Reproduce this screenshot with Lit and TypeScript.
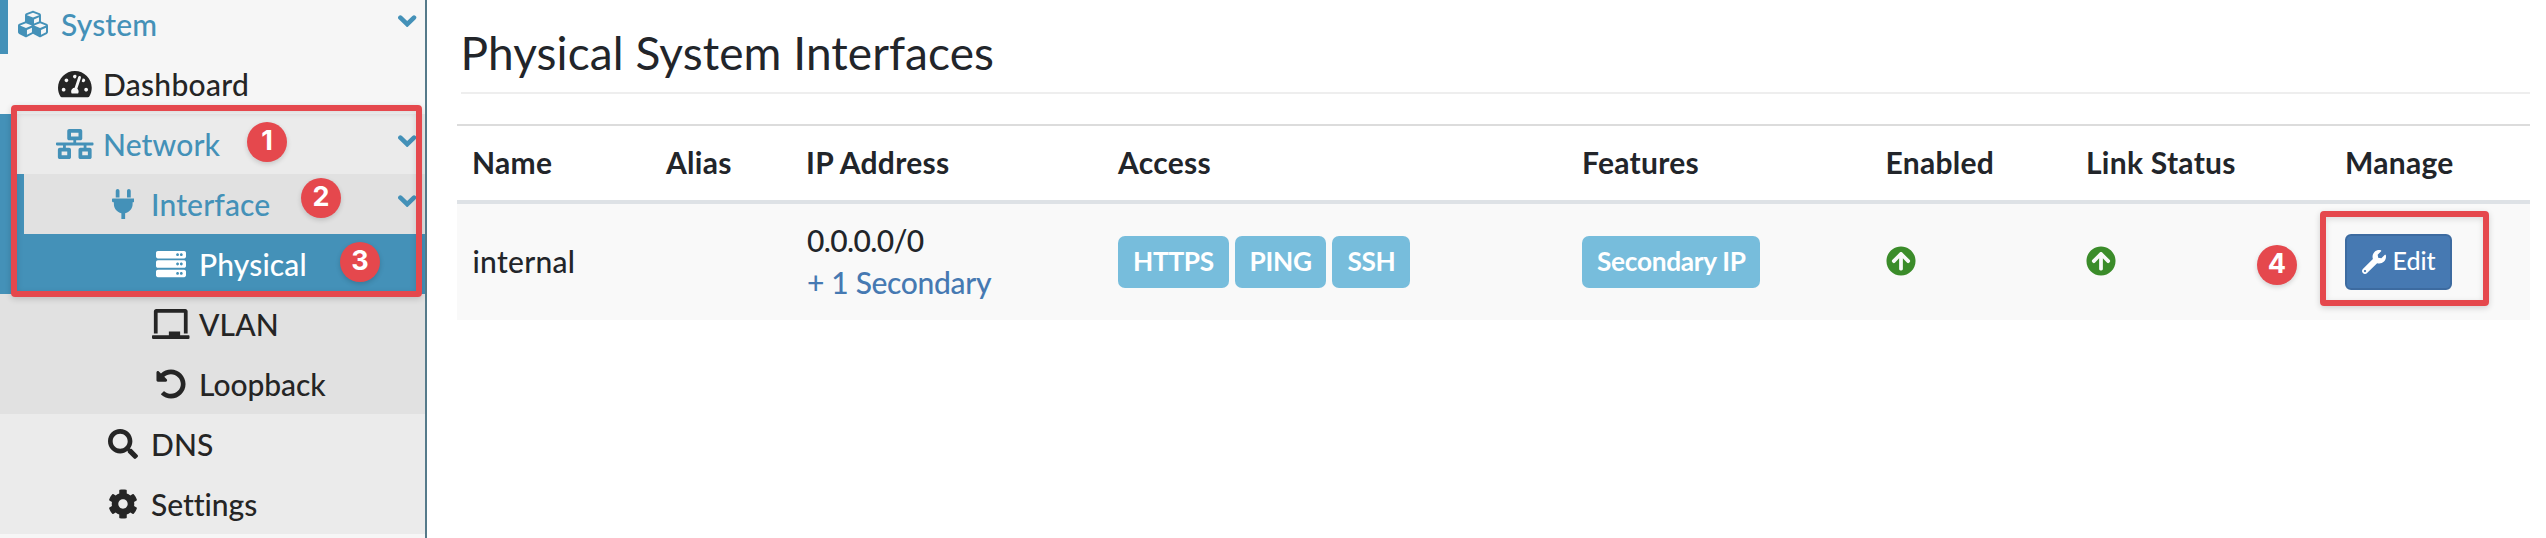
import { LitElement, html, css, svg, nothing } from "lit";
import { customElement, property } from "lit/decorators.js";

type Icon = { w: number; d: string };

const disk = (x: number, y: number) =>
  `M${x} ${y - 24}c-13.255 0-24 10.745-24 24s10.745 24 24 24 24-10.745 24-24-10.745-24-24-24z`;
const unit = (y: number) =>
  `M480 ${y + 128}H32c-17.673 0-32-14.327-32-32V${y + 32}c0-17.673 14.327-32 32-32h448c17.673 0 32 14.327 32 32v64c0 17.673-14.327 32-32 32z${disk(432, y + 64)}${disk(368, y + 64)}`;

const ICONS: Record<string, Icon> = {
  cubes: { w: 512, d: "M488.6 250.2L392 214V105.5c0-15-9.3-28.4-23.4-33.7l-100-37.5c-8.1-3.1-17.1-3.1-25.3 0l-100 37.5c-14.1 5.3-23.4 18.7-23.4 33.7V214l-96.6 36.2C9.3 255.5 0 268.9 0 283.9V394c0 13.6 7.7 26.1 19.9 32.2l100 50c10.1 5.1 22.1 5.1 32.2 0l103.9-52 103.9 52c10.1 5.1 22.1 5.1 32.2 0l100-50c12.2-6.1 19.9-18.6 19.9-32.2V283.9c0-15-9.3-28.4-23.4-33.7zM358 214.8l-85 31.9v-68.2l85-37v73.3zM154 104.1l102-38.2 102 38.2v.6l-102 41.4-102-41.4v-.6zm84 291.1l-85 42.5v-79.1l85-38.8v75.4zm0-112l-102 41.4-102-41.4v-.6l102-38.2 102 38.2v.6zm240 112l-85 42.5v-79.1l85-38.8v75.4zm0-112l-102 41.4-102-41.4v-.6l102-38.2 102 38.2v.6z" },
  gauge: { w: 576, d: "M288 32C128.94 32 0 160.94 0 320c0 52.8 14.25 102.26 39.06 144.8 5.61 9.62 16.3 15.2 27.44 15.2h443c11.14 0 21.83-5.58 27.44-15.2C561.75 422.26 576 372.8 576 320c0-159.06-128.94-288-288-288zm0 64c14.71 0 26.58 10.13 30.32 23.65-1.11 2.26-2.64 4.23-3.45 6.67l-9.22 27.67c-5.13 3.49-10.97 6.01-17.64 6.01-17.67 0-32-14.33-32-32S270.33 96 288 96zM96 384c-17.67 0-32-14.33-32-32s14.33-32 32-32 32 14.33 32 32-14.33 32-32 32zm48-160c-17.67 0-32-14.33-32-32s14.33-32 32-32 32 14.33 32 32-14.33 32-32 32zm246.77-72.41l-61.33 184C343.13 347.33 352 364.54 352 384c0 11.72-3.38 22.55-8.88 32H232.88c-5.5-9.45-8.88-20.28-8.88-32 0-33.94 26.5-61.43 59.9-63.59l61.34-184.01c4.17-12.56 17.73-19.45 30.36-15.17 12.57 4.19 19.35 17.79 15.17 30.36zm14.66 57.2l15.52-46.55c3.47-1.29 7.13-2.23 11.05-2.23 17.67 0 32 14.33 32 32s-14.33 32-32 32c-11.38-.01-20.89-6.28-26.57-15.22zM480 384c-17.67 0-32-14.33-32-32s14.33-32 32-32 32 14.33 32 32-14.33 32-32 32z" },
  network: { w: 640, d: "M640 264v-16c0-8.84-7.16-16-16-16H344v-40h72c17.67 0 32-14.33 32-32V32c0-17.67-14.33-32-32-32H224c-17.67 0-32 14.33-32 32v128c0 17.67 14.33 32 32 32h72v40H16c-8.84 0-16 7.16-16 16v16c0 8.84 7.16 16 16 16h104v40H64c-17.67 0-32 14.33-32 32v128c0 17.67 14.33 32 32 32h160c17.67 0 32-14.33 32-32V352c0-17.67-14.33-32-32-32h-56v-40h304v40h-56c-17.67 0-32 14.33-32 32v128c0 17.67 14.33 32 32 32h160c17.67 0 32-14.33 32-32V352c0-17.67-14.33-32-32-32h-56v-40h104c8.84 0 16-7.16 16-16zM256 128V64h128v64H256zm-64 320H96v-64h96v64zm352 0h-96v-64h96v64z" },
  plug: { w: 384, d: "M256 144V32c0-17.673 14.327-32 32-32s32 14.327 32 32v112h-64zm112 16H16c-8.837 0-16 7.163-16 16v32c0 8.837 7.163 16 16 16h16v32c0 77.406 54.969 141.971 128 156.796V512h64v-99.204c73.031-14.825 128-79.39 128-156.796v-32h16c8.837 0 16-7.163 16-16v-32c0-8.837-7.163-16-16-16zm-240-16V32c0-17.673-14.327-32-32-32S64 14.327 64 32v112h64z" },
  server: { w: 512, d: unit(32) + unit(192) + unit(352) },
  board: { w: 640, d: "M96 64h448v352h64V40c0-22.06-17.94-40-40-40H72C49.94 0 32 17.94 32 40v376h64V64zm528 384H480v-64H288v64H16c-8.84 0-16 7.16-16 16v32c0 8.84 7.16 16 16 16h608c8.84 0 16-7.16 16-16v-32c0-8.84-7.16-16-16-16z" },
  undo: { w: 512, d: "M255.545 8c-66.269.119-126.438 26.233-170.86 68.685L48.971 40.971C33.851 25.851 8 36.559 8 57.941V192c0 13.255 10.745 24 24 24h134.059c21.382 0 32.09-25.851 16.971-40.971l-41.75-41.75c30.864-28.899 70.801-44.907 113.23-45.273 92.398-.798 170.283 73.977 169.484 169.442C423.236 348.009 349.816 424 256 424c-41.127 0-79.997-14.678-110.63-41.556-4.743-4.161-11.906-3.908-16.368.553L89.34 422.659c-4.872 4.872-4.631 12.815.482 17.433C133.798 479.813 192.074 504 256 504c136.966 0 247.999-111.033 248-247.998C504.001 119.193 392.354 7.755 255.545 8z" },
  search: { w: 512, d: "M505 442.7L405.3 343c-4.5-4.5-10.6-7-17-7H372c27.6-35.3 44-79.7 44-128C416 93.1 322.9 0 208 0S0 93.1 0 208s93.1 208 208 208c48.3 0 92.7-16.4 128-44v16.3c0 6.4 2.5 12.5 7 17l99.7 99.7c9.4 9.4 24.6 9.4 33.9 0l28.3-28.3c9.4-9.4 9.4-24.6.1-34zM208 336c-70.7 0-128-57.2-128-128 0-70.7 57.2-128 128-128 70.7 0 128 57.2 128 128 0 70.7-57.2 128-128 128z" },
  cog: { w: 512, d: "M487.4 315.7l-42.6-24.6c4.3-23.2 4.3-47 0-70.2l42.6-24.6c4.9-2.8 7.1-8.6 5.5-14-11.1-35.6-30-67.8-54.7-94.6-3.8-4.1-10-5.1-14.8-2.3L380.8 110c-17.9-15.4-38.5-27.3-60.8-35.1V25.8c0-5.6-3.9-10.5-9.4-11.7-36.7-8.2-74.3-7.8-109.2 0-5.5 1.2-9.4 6.1-9.4 11.7V75c-22.2 7.9-42.8 19.8-60.8 35.1L88.7 85.5c-4.9-2.8-11-1.9-14.8 2.3-24.7 26.7-43.6 58.9-54.7 94.6-1.7 5.4.6 11.2 5.5 14L67.3 221c-4.3 23.2-4.3 47 0 70.2l-42.6 24.6c-4.9 2.8-7.1 8.6-5.5 14 11.1 35.6 30 67.8 54.7 94.6 3.8 4.1 10 5.1 14.8 2.3l42.6-24.6c17.9 15.4 38.5 27.3 60.8 35.1v49.2c0 5.6 3.9 10.5 9.4 11.7 36.7 8.2 74.3 7.8 109.2 0 5.5-1.2 9.4-6.1 9.4-11.7v-49.2c22.2-7.9 42.8-19.8 60.8-35.1l42.6 24.6c4.9 2.8 11 1.9 14.8-2.3 24.7-26.7 43.6-58.9 54.7-94.6 1.5-5.5-.7-11.3-5.6-14.1zM256 336c-44.1 0-80-35.9-80-80s35.9-80 80-80 80 35.9 80 80-35.9 80-80 80z" },
  wrench: { w: 512, d: "M507.73 109.1c-2.24-9.03-13.54-12.09-20.12-5.51l-74.36 74.36-67.88-11.31-11.31-67.88 74.36-74.36c6.62-6.62 3.43-17.9-5.66-20.16-47.38-11.74-99.55.91-136.58 37.93-39.64 39.64-50.55 97.1-34.05 147.2L18.74 402.76c-24.99 24.99-24.99 65.51 0 90.5 24.99 24.99 65.51 24.99 90.5 0l213.21-213.21c50.12 16.71 107.47 5.68 147.37-34.22 37.07-37.07 49.7-89.32 37.91-136.73zM64 472c-13.25 0-24-10.75-24-24 0-13.26 10.75-24 24-24s24 10.74 24 24c0 13.25-10.75 24-24 24z" },
  up: { w: 512, d: "M8 256C8 119 119 8 256 8s248 111 248 248-111 248-248 248S8 393 8 256zm143.6 28.9l72.4-75.5V392c0 13.3 10.7 24 24 24h16c13.3 0 24-10.7 24-24V209.4l72.4 75.5c9.3 9.7 24.8 9.9 34.3.4l10.9-11c9.4-9.4 9.4-24.6 0-33.9L273 107.7c-9.4-9.4-24.6-9.4-33.9 0L106.3 240.4c-9.4 9.4-9.4 24.6 0 33.9l10.9 11c9.6 9.5 25.1 9.3 34.4-.4z" },
};

@customElement("fa-icon")
class FaIcon extends LitElement {
  @property() name = "";
  static styles = css`
    :host { display: inline-flex; justify-content: center; align-items: center; flex: none; }
    .glyph { display: block; height: 1em; width: auto; fill: currentColor; fill-rule: evenodd; }
  `;
  render() {
    const i = ICONS[this.name];
    return html`<svg class="glyph" viewBox="0 0 ${i.w} 512">${svg`<path d=${i.d}></path>`}</svg>`;
  }
}

const MENU = [
  { label: "System", icon: "cubes", cls: "top", open: true },
  { label: "Dashboard", icon: "gauge", cls: "l2 wide", open: false },
  { label: "Network", icon: "network", cls: "l2 net", open: true },
  { label: "Interface", icon: "plug", cls: "l3 iface", open: true },
  { label: "Physical", icon: "server", cls: "l4 active", open: false },
  { label: "VLAN", icon: "board", cls: "l4", open: false },
  { label: "Loopback", icon: "undo", cls: "l4 snug", open: false },
  { label: "DNS", icon: "search", cls: "l3", open: false },
  { label: "Settings", icon: "cog", cls: "l3 snug", open: false },
];

@customElement("side-menu")
class SideMenu extends LitElement {
  static styles = css`
    :host { display: block; width: 425px; flex: none; background: #f6f6f6; border-right: 2px solid #557a8a; overflow: hidden; }
    .row { display: flex; align-items: center; height: 60px; box-sizing: border-box; padding-right: 8.3px; color: #252525; font-size: 30px; line-height: 60px; letter-spacing: 0.15px; font-variant-ligatures: none; }
    .icon { width: 37.5px; margin-right: 9.5px; }
    .label { flex: 1; }
    .caret { display: block; width: 18.4px; height: 12.6px; margin-bottom: 6px; fill: none; stroke: currentColor; stroke-width: 4.6; stroke-linecap: round; }
    .top { margin-top: -6px; padding-left: 6px; border-left: 8px solid #4491b8; color: #4491b8; }
    .l2 { padding-left: 56px; }
    .l3 { padding-left: 104px; background: #ebebeb; }
    .l4 { padding-left: 152px; background: #e1e1e1; }
    .wide { letter-spacing: 0.3px; }
    .snug { letter-spacing: -0.05px; }
    .net { padding-left: 40px; border-left: 16px solid #4491b8; background: #ebebeb; color: #4491b8; }
    .iface { padding-left: 80px; border-left: 24px solid #4491b8; background: #e1e1e1; color: #4491b8; }
    .active { background: #4491b8; color: #fff; }
  `;
  render() {
    return MENU.map(
      (m) => html`<div class="row ${m.cls}">
        <fa-icon class="icon" name=${m.icon}></fa-icon>
        <span class="label">${m.label}</span>
        ${m.open ? html`<svg class="caret" viewBox="0 0 18.4 12.6"><path d="M2.4 2.6L9.2 9.2L16 2.6"></path></svg>` : nothing}
      </div>`
    );
  }
}

@customElement("interface-table")
class InterfaceTable extends LitElement {
  static styles = css`
    :host { display: block; }
    .line { display: grid; grid-template-columns: 194px 140px 312px 464px 303.5px 200.5px 259px 1fr; align-items: center; padding-left: 15px; letter-spacing: 0.28px; font-variant-ligatures: none; }
    .head { border-top: 2px solid #dcdcdc; border-bottom: 4px solid #dee2e6; font-weight: 700; height: 72px; padding-bottom: 2px; }
    .body { background: #f9f9f9; height: 116px; }
    .name { padding: 0 0 2px 0.5px; }
    .addr { padding: 0 0 2px 1px; line-height: 42px; }
    .net { letter-spacing: -0.6px; }
    .link { color: #4679b2; letter-spacing: -0.33px; }
    .badges { display: flex; gap: 6px; }
    .badge { height: 52px; line-height: 50px; padding: 0 14.7px 0 15px; border-radius: 7px; background: #77bddc; color: #fff; font-size: 26.25px; font-weight: 700; letter-spacing: -0.3px; }
    .ok { color: #3b8c2a; justify-self: start; padding-bottom: 2px; }
    .edit { justify-self: start; display: flex; align-items: center; gap: 6.5px; box-sizing: border-box; height: 56px; padding: 0 14px 0 15px; border: 2px solid #3d6ba0; border-radius: 6px; background: #4679b2; color: #fff; font-size: 25px; letter-spacing: 0; }
    .tool { font-size: 24px; }
    .text { padding-bottom: 3px; }
  `;
  render() {
    return html`
      <div class="line head">
        ${["Name", "Alias", "IP Address", "Access", "Features", "Enabled", "Link Status", "Manage"].map((h) => html`<span>${h}</span>`)}
      </div>
      <div class="line body">
        <span class="name">internal</span>
        <span></span>
        <div class="addr"><div class="net">0.0.0.0/0</div><div class="link">+ 1 Secondary</div></div>
        <div class="badges">${["HTTPS", "PING", "SSH"].map((b) => html`<span class="badge">${b}</span>`)}</div>
        <div class="badges"><span class="badge">Secondary IP</span></div>
        <fa-icon class="ok" name="up"></fa-icon>
        <fa-icon class="ok" name="up"></fa-icon>
        <div class="edit"><fa-icon class="tool" name="wrench"></fa-icon><span class="text">Edit</span></div>
      </div>
    `;
  }
}

@customElement("app-root")
class AppRoot extends LitElement {
  static styles = css`
    :host { display: flex; position: relative; height: 538px; overflow: hidden; background: #fff; color: #22252a; font-family: Lato, sans-serif; font-weight: 500; font-size: 30px; line-height: 42.86px; }
    .main { flex: 1; padding: 0 16px 0 30px; }
    .title { margin: 0 0 0 3.5px; height: 92px; padding-top: 20px; box-sizing: border-box; font-weight: 400; font-size: 46px; line-height: 66px; letter-spacing: 0.08px; }
    .rule { margin: 0 0 30px 4px; height: 2px; background: #eee; }
    .frame { position: absolute; box-sizing: border-box; border: 6px solid #e5484d; border-radius: 4px; box-shadow: 0 2px 6px rgba(0, 0, 0, 0.16), inset 0 2px 6px rgba(0, 0, 0, 0.12); }
    .frame-menu { left: 11px; top: 105px; width: 411px; height: 192px; }
    .frame-edit { left: 2320px; top: 211px; width: 169px; height: 95px; }
    .pin { position: absolute; width: 40px; height: 40px; border-radius: 50%; background: #e5484d; color: #fff; font: 700 27px/38px Inter, sans-serif; text-align: center; box-shadow: 0 2px 5px rgba(0, 0, 0, 0.16); }
    .p1 { left: 247px; top: 122px; }
    .p2 { left: 301px; top: 178px; }
    .p3 { left: 340px; top: 242px; }
    .p4 { left: 2257px; top: 245px; }
  `;
  render() {
    return html`
      <side-menu></side-menu>
      <main class="main">
        <h1 class="title">Physical System Interfaces</h1>
        <div class="rule"></div>
        <interface-table></interface-table>
      </main>
      <div class="frame frame-menu"></div>
      <div class="frame frame-edit"></div>
      ${[1, 2, 3, 4].map((n) => html`<div class="pin p${n}">${n}</div>`)}
    `;
  }
}
